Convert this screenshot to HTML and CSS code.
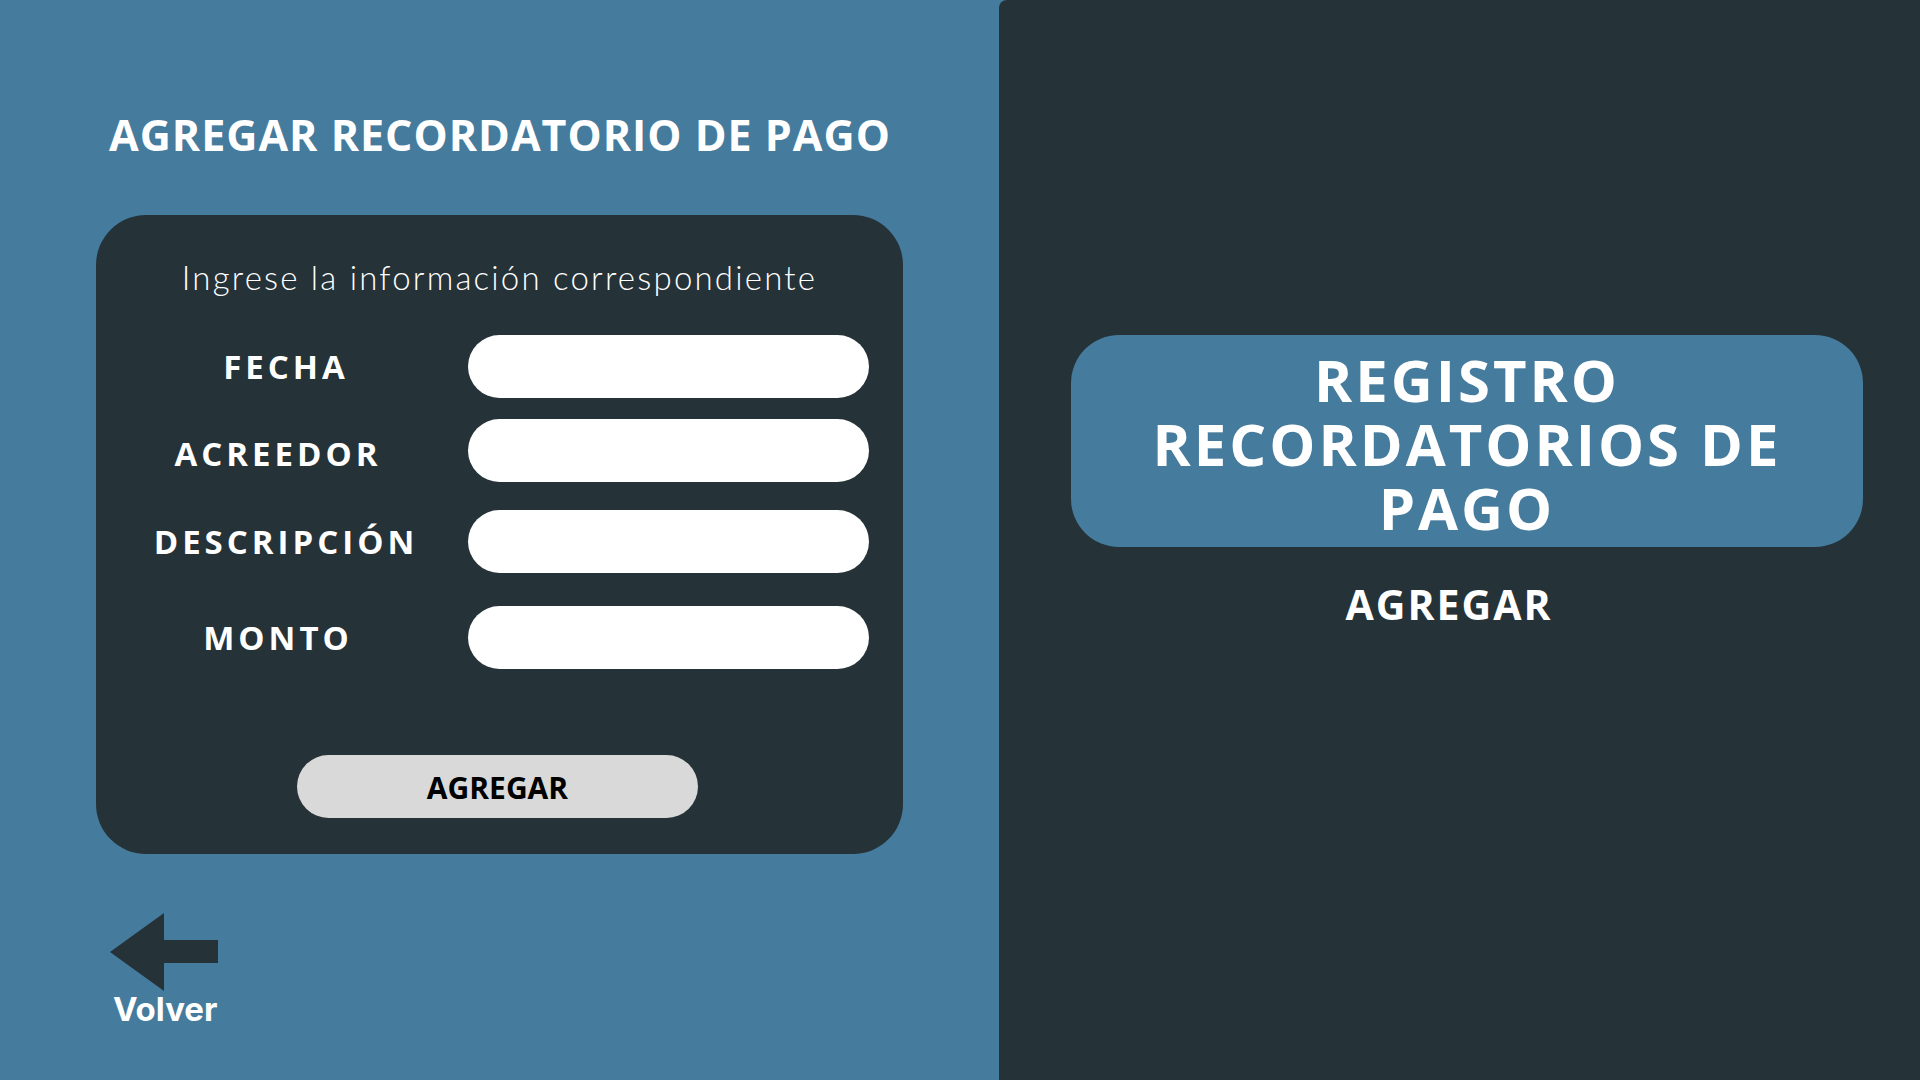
FILE: index.html
```html
<!DOCTYPE html>
<html lang="es">
<head>
<meta charset="utf-8">
<title>Agregar recordatorio de pago</title>
<link rel="stylesheet" href="styles.css">
</head>
<body>
<div class="screen">
  <main class="left">
    <h1 class="title">AGREGAR RECORDATORIO DE PAGO</h1>
    <form class="card">
      <p class="subtitle">Ingrese la información correspondiente</p>
      <div class="row row-1">
        <label class="label">FECHA</label>
        <div class="field"></div>
      </div>
      <div class="row row-2">
        <label class="label">ACREEDOR</label>
        <div class="field"></div>
      </div>
      <div class="row row-3">
        <label class="label">DESCRIPCIÓN</label>
        <div class="field"></div>
      </div>
      <div class="row row-4">
        <label class="label">MONTO</label>
        <div class="field"></div>
      </div>
      <div class="actions">
        <div class="btn">AGREGAR</div>
      </div>
    </form>
    <div class="back">
      <svg class="back-icon" width="108" height="78" viewBox="0 0 108 78">
        <polygon points="0,39 54,0 54,27 108,27 108,50 54,50 54,78" fill="#253238"/>
      </svg>
      <span class="back-text">Volver</span>
    </div>
  </main>
  <aside class="right">
    <div class="banner">
      <span class="banner-line">REGISTRO</span>
      <span class="banner-line">RECORDATORIOS DE</span>
      <span class="banner-line">PAGO</span>
    </div>
    <div class="right-link">AGREGAR</div>
  </aside>
</div>
</body>
</html>
```
FILE: styles.css
```css
* { box-sizing: border-box; }
html, body {
  margin: 0;
  padding: 0;
  width: 1920px;
  height: 1080px;
  overflow: hidden;
  background: #457b9d;
}
.screen {
  display: flex;
  width: 1920px;
  height: 1080px;
}
.left {
  width: 999px;
  flex: none;
  background: #457b9d;
  padding-top: 113px;
}
.title {
  margin: 0 0 0 109px;
  font-family: "Open Sans", "Liberation Sans", sans-serif;
  font-weight: 700;
  font-size: 43px;
  line-height: 43px;
  letter-spacing: 1px;
  color: #ffffff;
  white-space: nowrap;
}
.card {
  margin: 59px 0 0 96px;
  width: 807px;
  background: #253238;
  border-radius: 50px;
  padding: 46px 0 36px 0;
  display: flex;
  flex-direction: column;
}
.subtitle {
  margin: 0;
  text-align: center;
  font-family: "Lato", "Liberation Sans", sans-serif;
  font-weight: 300;
  font-size: 33px;
  line-height: 32px;
  letter-spacing: 2.2px;
  color: #ffffff;
}
.row {
  display: flex;
  align-items: center;
  height: 63px;
}
.row-1 { margin-top: 42px; }
.row-2 { margin-top: 21px; }
.row-3 { margin-top: 28px; }
.row-4 { margin-top: 33px; }
.label {
  flex: 1;
  text-align: center;
  font-family: "Open Sans", "Liberation Sans", sans-serif;
  font-weight: 700;
  font-size: 33px;
  letter-spacing: 4px;
  color: #ffffff;
}
.row-1 .label, .row-3 .label { padding-left: 8px; }
.row-2 .label, .row-4 .label { padding-right: 8px; }
.row-2 .label { padding-top: 6px; }
.field {
  width: 401px;
  height: 63px;
  margin-right: 34px;
  background: #ffffff;
  border-radius: 32px;
}
.actions {
  display: flex;
  justify-content: center;
  margin-top: 86px;
  padding-right: 4px;
}
.btn {
  width: 401px;
  height: 63px;
  border-radius: 32px;
  background: #d9d9d9;
  display: flex;
  align-items: center;
  justify-content: center;
  font-family: "Open Sans", "Liberation Sans", sans-serif;
  font-weight: 700;
  font-size: 30px;
  color: #000000;
  padding-top: 2px;
}
.back {
  margin: 59px 0 0 110px;
  display: flex;
  flex-direction: column;
  align-items: flex-start;
}
.back-icon { display: block; }
.back-text {
  margin: 2px 0 0 3px;
  font-family: "Inter", "Liberation Sans", sans-serif;
  font-weight: 700;
  font-size: 33px;
  line-height: 32px;
  color: #ffffff;
}
.right {
  flex: 1;
  background: #253238;
  border-top-left-radius: 8px;
  padding-top: 335px;
}
.banner {
  margin-left: 72px;
  width: 792px;
  height: 212px;
  background: #457b9d;
  border-radius: 48px;
  padding-top: 13px;
  display: flex;
  flex-direction: column;
  align-items: center;
  font-family: "Open Sans", "Liberation Sans", sans-serif;
  font-weight: 700;
  font-size: 58px;
  letter-spacing: 3px;
  color: #ffffff;
}
.banner-line {
  display: block;
  height: 64px;
  line-height: 64px;
}
.right-link {
  margin: 37px 0 0 72px;
  width: 792px;
  padding-right: 36px;
  text-align: center;
  font-family: "Open Sans", "Liberation Sans", sans-serif;
  font-weight: 700;
  font-size: 41px;
  line-height: 41px;
  letter-spacing: 2px;
  color: #ffffff;
}
```
